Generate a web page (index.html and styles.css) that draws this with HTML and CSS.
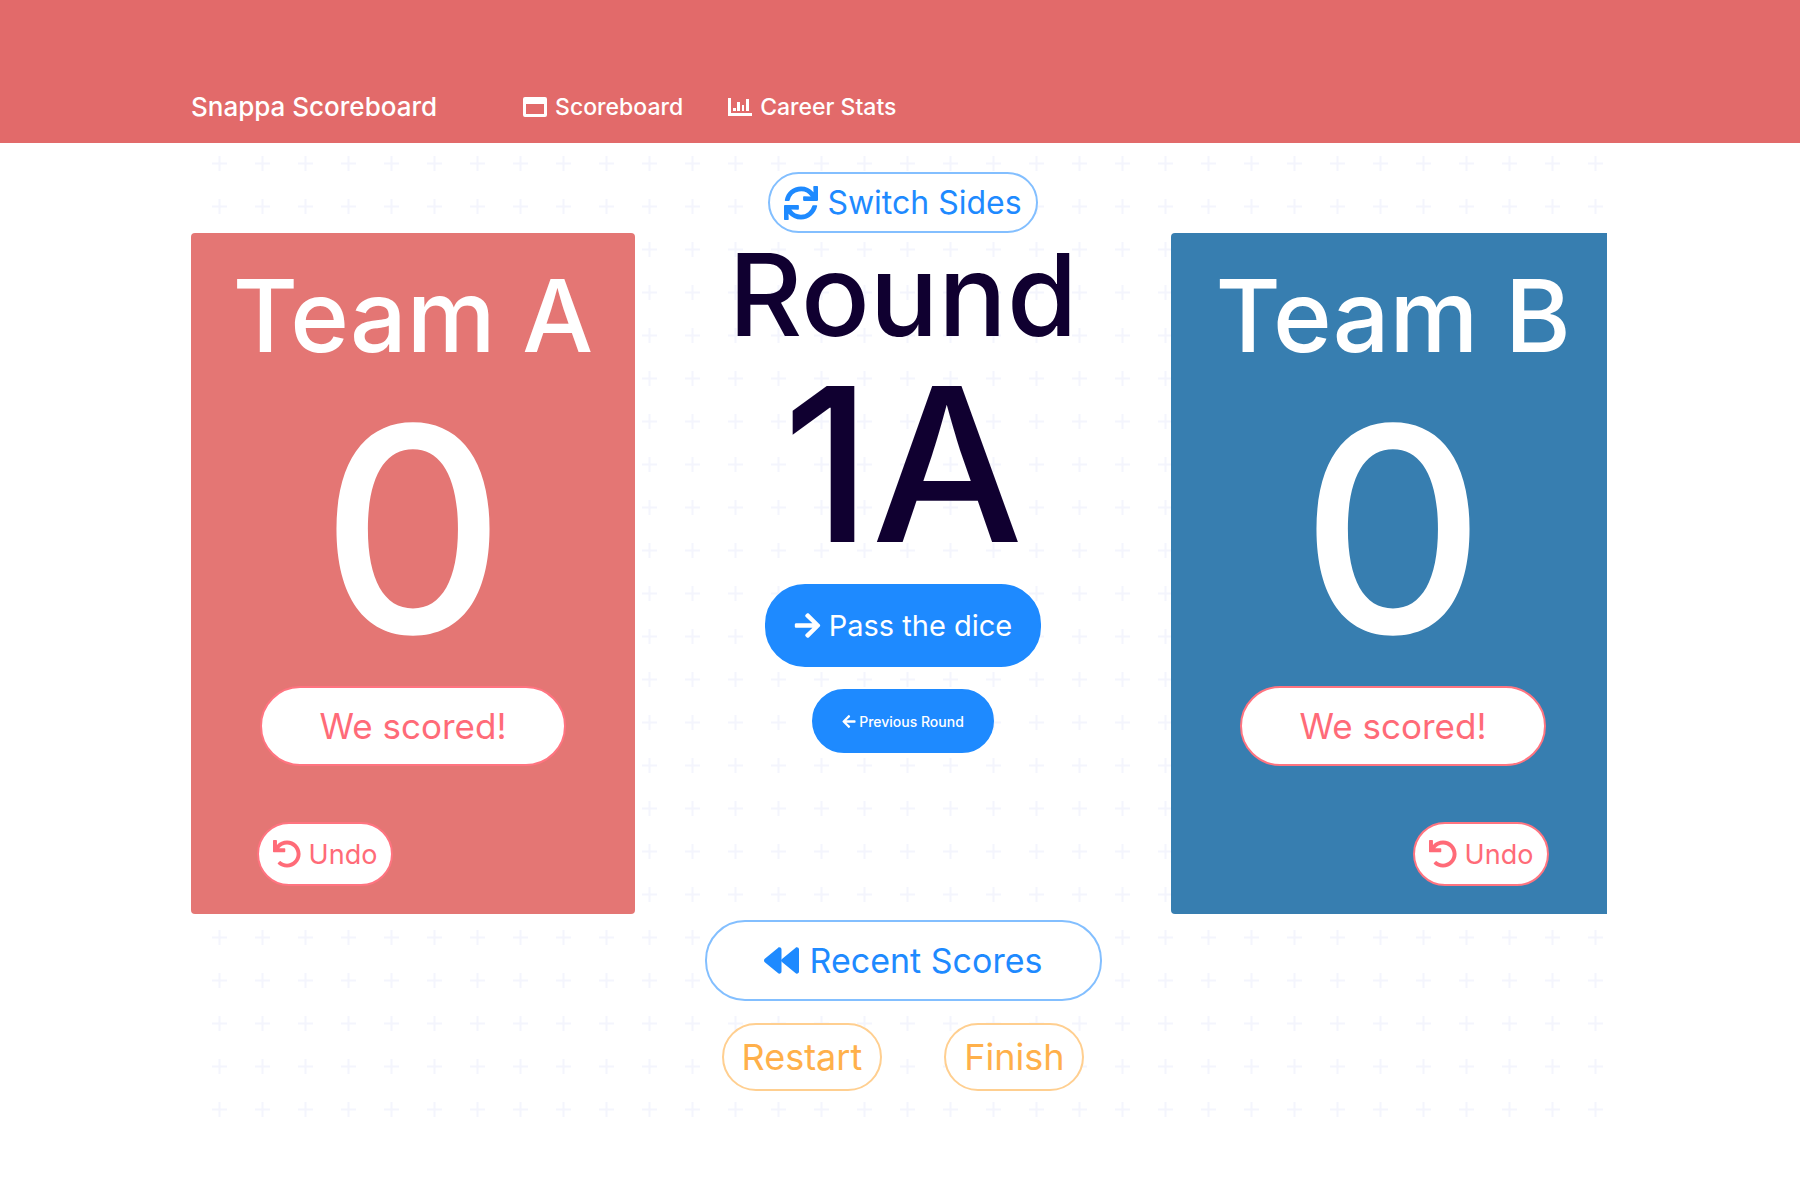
FILE: index.html
```html
<!DOCTYPE html>
<html lang="en">
<head>
<meta charset="utf-8">
<title>Snappa Scoreboard</title>
<link rel="stylesheet" href="styles.css">
</head>
<body>
<svg class="defs" aria-hidden="true">
  <defs>
    <pattern id="plus" width="43" height="43" patternUnits="userSpaceOnUse">
      <path d="M28.500 13v15M21 20.500h15" stroke="#f4f5fd" stroke-width="2" fill="none"/>
    </pattern>
    <symbol id="undo" viewBox="0 0 512 512"><path d="M212.333 224.333H12c-6.627 0-12-5.373-12-12V12C0 5.373 5.373 0 12 0h48c6.627 0 12 5.373 12 12v78.112C117.773 39.279 184.26 7.47 258.175 8.007c136.906.994 246.448 111.623 246.157 248.532C504.041 393.258 393.12 504 256.333 504c-64.089 0-122.496-24.313-166.51-64.215-5.099-4.622-5.334-12.554-.467-17.42l33.967-33.967c4.474-4.474 11.662-4.717 16.401-.525C170.76 415.336 211.58 432 256.333 432c97.268 0 176-78.716 176-176 0-97.267-78.716-176-176-176-58.496 0-110.28 28.476-142.274 72.333h98.274c6.627 0 12 5.373 12 12v48c0 6.627-5.373 12-12 12z"/></symbol>
    <symbol id="arrow" viewBox="0 0 448 512"><path d="M190.5 66.9l22.2-22.2c9.4-9.4 24.6-9.4 33.9 0L441 239c9.4 9.4 9.4 24.6 0 33.9L246.6 467.3c-9.4 9.4-24.6 9.4-33.9 0l-22.2-22.2c-9.5-9.5-9.3-25 .4-34.3L311.4 296H24c-13.3 0-24-10.7-24-24v-32c0-13.3 10.7-24 24-24h287.4L190.9 101.2c-9.8-9.3-10-24.8-.4-34.3z"/></symbol>
  </defs>
</svg>

<header class="header">
  <a class="brand" href="#">Snappa Scoreboard</a>
  <nav class="nav">
    <a class="nav-link" href="#scoreboard">
      <svg class="nav-icon" viewBox="0 0 24 24" aria-hidden="true"><path fill-rule="evenodd" d="M2 2h20a2 2 0 0 1 2 2v16a2 2 0 0 1-2 2H2a2 2 0 0 1-2-2V4a2 2 0 0 1 2-2zM3 9v10h18V9z"/></svg>
      Scoreboard
    </a>
    <a class="nav-link" href="#stats">
      <svg class="nav-icon" viewBox="0 0 24 24" aria-hidden="true"><path d="M0 3h3v15h21v3H0zM5 13h3v3H5zM9 7h3v9H9zM14 10h2v6h-2zM18 4h3v12h-3z"/></svg>
      Career Stats
    </a>
  </nav>
</header>

<main class="main" id="scoreboard">
  <svg class="backdrop" width="100%" height="100%" aria-hidden="true"><rect width="100%" height="100%" fill="url(#plus)"/></svg>
  <div class="page">
    <button class="btn btn-switch" type="button">
      <svg class="icon-switch" viewBox="0 0 512 512" aria-hidden="true"><path d="M440.65 12.57l4 82.77A247.16 247.16 0 0 0 255.83 8C134.73 8 33.91 94.92 12.29 209.82A12 12 0 0 0 24.09 224h49.05a12 12 0 0 0 11.67-9.26 175.91 175.91 0 0 1 317-56.94l-101.46-4.86a12 12 0 0 0-12.57 12v47.41a12 12 0 0 0 12 12H500a12 12 0 0 0 12-12V12a12 12 0 0 0-12-12h-47.37a12 12 0 0 0-11.98 12.57zM255.83 432a175.61 175.61 0 0 1-146-77.8l101.8 4.87a12 12 0 0 0 12.57-12v-47.4a12 12 0 0 0-12-12H12a12 12 0 0 0-12 12V500a12 12 0 0 0 12 12h47.35a12 12 0 0 0 12-12.6l-4.15-82.57A247.17 247.17 0 0 0 255.83 504c121.11 0 221.93-86.92 243.55-201.82a12 12 0 0 0-11.8-14.18h-49.05a12 12 0 0 0-11.67 9.26A175.86 175.86 0 0 1 255.83 432z"/></svg>
      Switch Sides
    </button>

    <div class="board">
      <section class="team team-a">
        <h2 class="team-name">Team A</h2>
        <p class="score">0</p>
        <button class="btn btn-score" type="button">We scored!</button>
        <button class="btn btn-undo" type="button"><svg class="icon-undo" aria-hidden="true"><use href="#undo"/></svg>Undo</button>
      </section>

      <section class="round">
        <h1 class="round-label">Round</h1>
        <p class="round-value">1A</p>
        <button class="btn btn-pass" type="button"><svg class="icon-next" aria-hidden="true"><use href="#arrow"/></svg>Pass the dice</button>
        <button class="btn btn-previous" type="button"><svg class="icon-previous" aria-hidden="true"><use href="#arrow"/></svg>Previous Round</button>
      </section>

      <section class="team team-b">
        <h2 class="team-name">Team B</h2>
        <p class="score">0</p>
        <button class="btn btn-score" type="button">We scored!</button>
        <button class="btn btn-undo" type="button"><svg class="icon-undo" aria-hidden="true"><use href="#undo"/></svg>Undo</button>
      </section>
    </div>

    <div class="actions">
      <button class="btn btn-recent" type="button">
        <svg class="icon-recent" viewBox="0 0 512 512" aria-hidden="true"><path d="M11.500 280.600l192 160c20.600 17.200 52.500 2.800 52.500-24.600V96c0-27.400-31.900-41.800-52.500-24.600l-192 160c-15.300 12.800-15.300 36.400 0 49.200zm256 0l192 160c20.600 17.200 52.500 2.800 52.500-24.600V96c0-27.400-31.900-41.800-52.500-24.600l-192 160c-15.300 12.800-15.300 36.400 0 49.200z"/></svg>
        Recent Scores
      </button>
      <div class="game-controls">
        <button class="btn btn-game" type="button">Restart</button>
        <button class="btn btn-game" type="button">Finish</button>
      </div>
    </div>
  </div>
</main>
</body>
</html>
```
FILE: styles.css
```css
* {
  box-sizing: border-box;
}

body {
  margin: 0;
  background: #fff;
  color: #100030;
  font-family: Inter, "Liberation Sans", sans-serif;
}

h1, h2, p {
  margin: 0;
  font-weight: 500;
}

svg {
  flex: none;
  fill: currentColor;
}

.defs {
  position: absolute;
  width: 0;
  height: 0;
}

/* Header */
.header {
  display: flex;
  align-items: center;
  gap: 86px;
  padding: 88px 193px 17px 191px;
  background: #e26a6a;
  line-height: 38px;
  font-weight: 500;
}

.header a {
  color: #fff;
  text-decoration: none;
}

.brand {
  font-size: 26px;
  line-height: 36px;
}

.nav {
  display: flex;
  gap: 45px;
  font-size: 23px;
}

.nav-link {
  display: flex;
  align-items: center;
  gap: 8px;
}

.nav-icon {
  width: 24px;
  height: 24px;
}

/* Scoreboard */
.main {
  position: relative;
  margin: 0 193px 0 191px;
  overflow: hidden;
}

.backdrop {
  position: absolute;
  inset: 0;
}

.page {
  position: relative;
  display: flex;
  flex-direction: column;
  align-items: center;
  margin-right: -8px;
  padding: 29px 0 33px;
}

.board {
  display: grid;
  grid-template-columns: minmax(0, 444fr) minmax(0, 536fr) minmax(0, 444fr);
  align-self: stretch;
}

.team,
.round {
  display: flex;
  flex-direction: column;
  align-items: center;
}

.team {
  padding: 23px 66px 28px;
  border-radius: 4px;
  color: #fff;
}

.team-a {
  background: rgba(226, 106, 104, 0.92);
}

.team-b {
  background: rgba(38, 115, 169, 0.92);
}

.team-name {
  font-size: 100px;
  line-height: 120px;
  white-space: nowrap;
}

.score {
  font-size: 286px;
  line-height: 306px;
}

.round-label {
  font-size: 114px;
  line-height: 124px;
}

.round-value {
  font-size: 214px;
  line-height: 216px;
  font-kerning: none;
}

/* Buttons */
.btn {
  display: flex;
  align-items: center;
  justify-content: center;
  padding: 0;
  border: 2px solid;
  border-radius: 40px;
  background: #fff;
  font: inherit;
  white-space: nowrap;
}

.btn-switch,
.btn-recent {
  border-color: #83bfff;
  color: #1e8aff;
}

.btn-switch {
  gap: 9px;
  width: 270px;
  height: 61px;
  font-size: 32px;
}

.icon-switch {
  width: 34px;
  height: 34px;
}

.btn-score,
.btn-undo {
  border-color: #ff7480;
  color: #ff6b78;
}

.btn-score {
  width: 306px;
  height: 80px;
  margin-top: 4px;
  font-size: 35px;
}

.btn-undo {
  align-self: flex-start;
  gap: 8px;
  width: 136px;
  height: 64px;
  margin-top: 56px;
  font-size: 27px;
}

.team-b .btn-undo {
  align-self: flex-end;
}

.icon-undo {
  width: 28px;
  height: 28px;
}

.btn-pass,
.btn-previous {
  border-color: #1e8aff;
  background: #1e8aff;
  color: #fff;
}

.btn-pass {
  gap: 8px;
  width: 276px;
  height: 83px;
  margin-top: 11px;
  font-size: 29px;
}

.icon-next {
  width: 27px;
  height: 29px;
}

.btn-previous {
  gap: 3px;
  width: 182px;
  height: 64px;
  margin-top: 22px;
  font-size: 14px;
  font-weight: 500;
}

.icon-previous {
  width: 14px;
  height: 15px;
  transform: scaleX(-1);
}

.actions {
  display: flex;
  flex-direction: column;
  align-items: center;
  gap: 22px;
  padding-top: 6px;
}

.btn-recent {
  gap: 11px;
  width: 397px;
  height: 81px;
  font-size: 34px;
}

.icon-recent {
  width: 35px;
  height: 35px;
}

.game-controls {
  display: flex;
  gap: 62px;
}

.btn-game {
  height: 68px;
  padding: 0 18px;
  border-color: #ffcf90;
  color: #ffb04a;
  font-size: 36px;
}
```
